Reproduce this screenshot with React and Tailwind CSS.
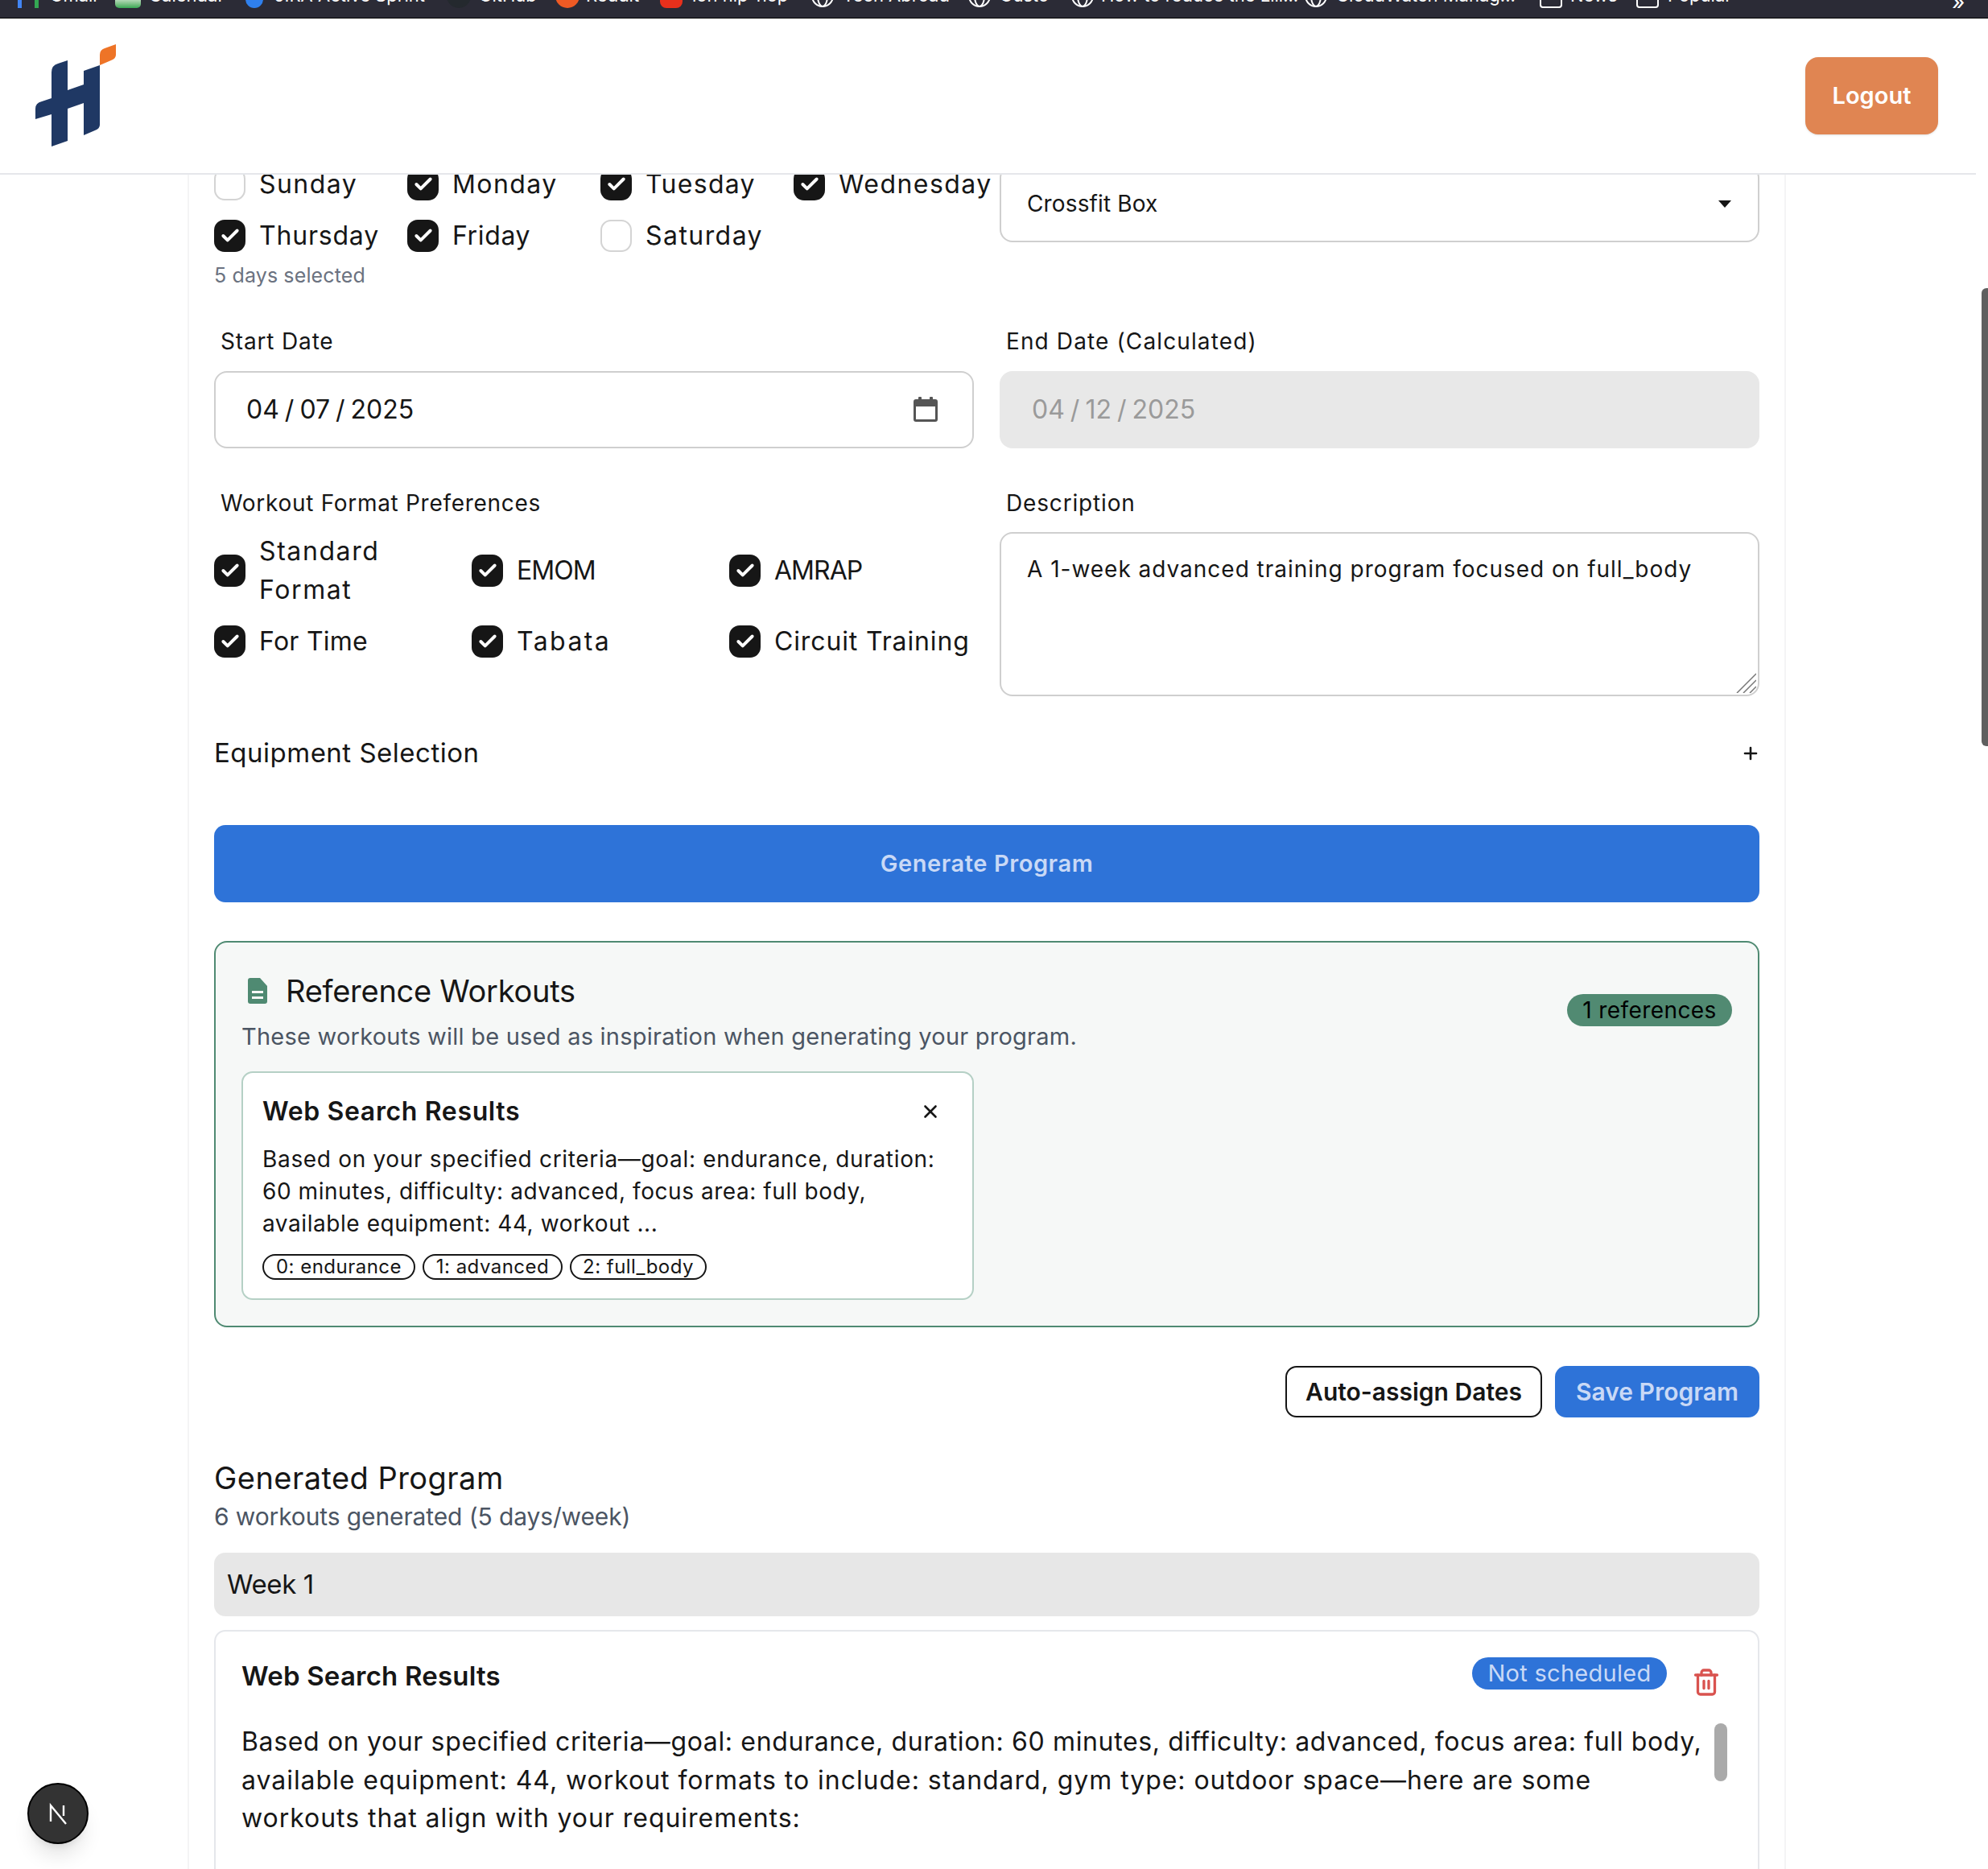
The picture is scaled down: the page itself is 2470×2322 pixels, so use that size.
import React from "react";
import { Check, Plus, X, Trash2 } from "lucide-react";

const Globe = () => (
  <svg width="30" height="30" viewBox="0 0 30 30" fill="none" stroke="#fff" strokeWidth="2" className="shrink-0">
    <circle cx="15" cy="15" r="13" />
    <ellipse cx="15" cy="15" rx="6" ry="13" />
  </svg>
);
const Folder = () => <div className="w-[28px] h-[30px] shrink-0 border-2 border-white rounded-[4px]" />;
const Dot = ({ cls }) => <div className={`h-[30px] shrink-0 ${cls}`} />;

const bookmarks = [
  { w: "w-[121px]", gap: "gap-[14px]", icon: <div className="w-[26px] h-[30px] shrink-0 flex justify-between"><div className="w-[5px] bg-[#4285f4]" /><div className="w-[5px] bg-[#34a853]" /></div>, t: "Gmail" },
  { w: "w-[162px]", gap: "gap-[10px]", icon: <Dot cls="w-[32px] rounded-[5px] bg-gradient-to-t from-[#34a853] via-[#e8f0e8] to-[#fbbc04]" />, t: "Calendar" },
  { w: "w-[250px]", gap: "gap-[14px]", icon: <Dot cls="w-[22px] rounded-b-[11px] bg-[#2f80ed]" />, t: "JIRA Active Sprint" },
  { w: "w-[135px]", gap: "gap-[10px]", icon: <Dot cls="w-[30px] rounded-full bg-[#24292e]" />, t: "GitHub" },
  { w: "w-[130px]", gap: "gap-[8px]", icon: <Dot cls="w-[30px] rounded-full bg-[#ee5a24]" />, t: "Reddit" },
  { w: "w-[187px]", gap: "gap-[12px]", icon: <Dot cls="w-[28px] rounded-[8px] bg-[#e8301c]" />, t: "ion hip-hop" },
  { w: "w-[195px]", gap: "gap-[10px]", icon: <Globe />, t: "Tech Abroad" },
  { w: "w-[128px]", gap: "gap-[10px]", icon: <Globe />, t: "Gusto" },
  { w: "w-[290px]", gap: "gap-[8px]", icon: <Globe />, t: "How to reduce the Lili..." },
  { w: "w-[293px]", gap: "gap-[10px]", icon: <Globe />, t: "CloudWatch Manag..." },
  { w: "w-[120px]", gap: "gap-[10px]", icon: <Folder />, t: "News" },
  { w: "w-[392px]", gap: "gap-[11px]", icon: <Folder />, t: "Popular" },
];

const Box = ({ on }) =>
  on ? (
    <div className="w-[39px] h-[40px] shrink-0 rounded-[13px] bg-[#161616] flex items-center justify-center">
      <Check size={26} strokeWidth={3.6} color="#fff" />
    </div>
  ) : (
    <div className="w-[39px] h-[40px] shrink-0 rounded-[13px] bg-white border-2 border-[#d4d4d4]" />
  );

const Opt = ({ cls, children }) => (
  <div className="flex items-center gap-[17px] min-w-0">
    <Box on />
    <span className={`text-[32px] leading-[48px] text-[#161616] whitespace-nowrap ${cls}`}>{children}</span>
  </div>
);

const Day = ({ on, w, cls = "tracking-[0.045em]", children }) => (
  <div className={`flex items-center gap-[17px] h-[40px] ${w}`}>
    <Box on={on} />
    <span className={`text-[32px] leading-[40px] text-[#161616] whitespace-nowrap ${cls}`}>{children}</span>
  </div>
);

const Label = ({ cls = "tracking-[0.03em]", children }) => (
  <div className={`h-[40px] pl-[8px] text-[28px] leading-[40px] text-[#161616] ${cls}`}>{children}</div>
);

export default function App() {
  return (
    <div className="relative w-[2470px] h-[2322px] overflow-hidden bg-white flex flex-col font-['Inter',sans-serif]">
      <div className="h-[23px] shrink-0 bg-[#2b2b36] border-b border-black flex overflow-hidden pl-[22px]">
        {bookmarks.map((b) => (
          <div key={b.t} className={`${b.w} shrink-0 flex ${b.gap} -mt-[20px] h-[30px]`}>
            {b.icon}
            <span className="text-[22px] leading-[28px] text-white whitespace-nowrap">{b.t}</span>
          </div>
        ))}
        <span className="text-[28px] leading-[20px] -mt-[8px] text-white">»</span>
      </div>

      <header className="h-[194px] w-[2455px] shrink-0 border-b-2 border-[#e5e7eb] flex items-start justify-between bg-white pl-[44px] pr-[47px] z-10">
        <svg width="100" height="130" viewBox="44 55 100 130" className="mt-[32px]">
          <path d="M64 90 Q64 81 72 79 L84 75 L84 112 L104 105 L104 88 L124 81 L124 155 Q124 160 118 162 L104 168 L104 128 L84 135 L84 175 L64 182 L64 142 L44 148 L44 135 Q44 128 52 126 L64 122 Z" fill="#1f3864" />
          <path d="M124 81 L124 68 Q124 62 130 60 L144 55 L144 68 Q144 73 138 75 Z" fill="#ee7427" />
        </svg>
        <button className="mt-[48px] w-[165px] h-[96px] rounded-[16px] bg-[#e08552] text-white text-[29px] font-semibold shadow-sm">Logout</button>
      </header>

      <main className="flex-1 min-h-0 overflow-hidden">
        <div className="ml-[233px] w-[1986px] border-x-2 border-[#f4f4f5] px-[31px] -mt-[12px] text-[#161616]">
          <div className="grid grid-cols-2 gap-x-[32px] h-[199px]">
            <div className="pt-[4px]">
              <div className="flex">
                <Day w="w-[240px]">Sunday</Day>
                <Day on w="w-[240px]">Monday</Day>
                <Day on w="w-[240px]" cls="tracking-[0.04em]">Tuesday</Day>
                <Day on w="w-[224px]">Wednesday</Day>
              </div>
              <div className="flex mt-[24px]">
                <Day on w="w-[240px]" cls="tracking-[0.025em]">Thursday</Day>
                <Day on w="w-[240px]" cls="tracking-[0.02em]">Friday</Day>
                <Day w="w-[240px]">Saturday</Day>
              </div>
              <div className="mt-[12px] text-[25px] leading-[34px] tracking-[0.005em] text-[#6b7280]">5 days selected</div>
            </div>
            <div className="h-[96px] border-2 border-[#cfcfcf] rounded-[16px] flex items-center justify-between pl-[32px] pr-[33px] bg-white">
              <span className="text-[28px] tracking-[0.005em]">Crossfit Box</span>
              <svg width="16" height="9" viewBox="0 0 16 9"><path d="M0 0 H16 L8 9 Z" fill="#161616" /></svg>
            </div>
          </div>

          <div className="grid grid-cols-2 gap-x-[32px]">
            <div>
              <Label>Start Date</Label>
              <div className="mt-[17px] h-[96px] border-2 border-[#cfcfcf] rounded-[16px] flex items-center justify-between pl-[38px] pr-[42px]">
                <span className="text-[32px] [word-spacing:-2px]">04 / 07 / 2025</span>
                <svg width="32" height="32" viewBox="0 0 32 32" fill="#555">
                  <rect x="7" y="0" width="4" height="6" rx="1" />
                  <rect x="21" y="0" width="4" height="6" rx="1" />
                  <path d="M4 3 H28 Q31 3 31 6 V28 Q31 31 28 31 H4 Q1 31 1 28 V6 Q1 3 4 3 Z M4 12 V28 H28 V12 Z" fillRule="evenodd" />
                </svg>
              </div>
            </div>
            <div>
              <Label cls="tracking-[0.04em]">End Date (Calculated)</Label>
              <div className="mt-[17px] h-[96px] rounded-[16px] bg-[#e8e8e8] flex items-center pl-[40px]">
                <span className="text-[32px] [word-spacing:-2px] text-[#9a9a9a]">04 / 12 / 2025</span>
              </div>
            </div>
          </div>

          <div className="grid grid-cols-2 gap-x-[32px] mt-[48px]">
            <div>
              <Label cls="tracking-[0.025em]">Workout Format Preferences</Label>
              <div className="mt-[16px] grid grid-cols-[320px_320px_304px]">
                <div className="h-[96px] flex items-center">
                  <Opt cls="tracking-[0.05em]"><span className="block">Standard</span><span className="block">Format</span></Opt>
                </div>
                <div className="h-[96px] flex items-center"><Opt cls="-tracking-[0.03em]">EMOM</Opt></div>
                <div className="h-[96px] flex items-center"><Opt cls="-tracking-[0.03em]">AMRAP</Opt></div>
                <div className="h-[48px] mt-[16px] flex items-center"><Opt cls="tracking-[0.008em]">For Time</Opt></div>
                <div className="h-[48px] mt-[16px] flex items-center"><Opt cls="tracking-[0.075em]">Tabata</Opt></div>
                <div className="h-[48px] mt-[16px] flex items-center"><Opt cls="tracking-[0.027em]">Circuit Training</Opt></div>
              </div>
            </div>
            <div>
              <Label>Description</Label>
              <div className="relative mt-[16px] h-[204px] border-2 border-[#cfcfcf] rounded-[16px] pl-[32px] pt-[22px]">
                <span className="text-[28px] leading-[44px] tracking-[0.035em]">A 1-week advanced training program focused on full_body</span>
                <svg className="absolute right-[2px] bottom-[2px]" width="26" height="26" viewBox="0 0 26 26" stroke="#777" strokeWidth="1.5">
                  <path d="M2 26 L26 2 M10 26 L26 10 M18 26 L26 18" />
                </svg>
              </div>
            </div>
          </div>

          <div className="mt-[51px] h-[40px] flex items-center justify-between">
            <span className="text-[33px] tracking-[0.015em]">Equipment Selection</span>
            <Plus size={24} strokeWidth={2.6} color="#161616" className="-mr-[1px]" />
          </div>

          <button className="mt-[69px] w-full h-[96px] rounded-[14px] bg-[#2e73d8] text-[#c9d9f6] text-[29px] tracking-[0.02em] font-semibold flex items-center justify-center">Generate Program</button>

          <section className="mt-[48px] h-[480px] border-2 border-[#4f8a72] rounded-[16px] bg-[#f6f8f7] pl-[32px] pr-[32px]">
            <div className="flex justify-between">
              <div>
                <div className="flex items-center gap-[23px] h-[60px] mt-[30px] pl-[8px]">
                  <svg width="24" height="32" viewBox="0 0 24 32">
                    <path d="M3 0 H15 L24 10 V29 Q24 32 21 32 H3 Q0 32 0 29 V3 Q0 0 3 0 Z" fill="#4f8a72" />
                    <rect x="5" y="16" width="14" height="3" fill="#f6f8f7" />
                    <rect x="5" y="23" width="14" height="3" fill="#f6f8f7" />
                  </svg>
                  <span className="text-[38px] -tracking-[0.007em]">Reference Workouts</span>
                </div>
                <div className="mt-[7px] text-[29px] leading-[40px] tracking-[0.008em] text-[#4b5563] whitespace-nowrap">These workouts will be used as inspiration when generating your program.</div>
              </div>
              <div className="mt-[64px] h-[40px] w-[205px] rounded-full bg-[#518a72] text-black text-[28px] tracking-[0.015em] flex items-center justify-center">1 references</div>
            </div>
            <div className="mt-[23px] w-[910px] h-[284px] border-2 border-[#b5d0c5] rounded-[14px] bg-white pl-[24px] pr-[24px]">
              <div className="flex items-center justify-between h-[40px] mt-[28px] pr-[15px]">
                <span className="text-[32px] font-semibold tracking-[0.02em]">Web Search Results</span>
                <X size={26} strokeWidth={2.4} color="#161616" />
              </div>
              <div className="mt-[19px] text-[28px] leading-[40px] tracking-[0.02em] whitespace-nowrap">
                <div className="tracking-[0.024em]">Based on your specified criteria—goal: endurance, duration:</div>
                <div>60 minutes, difficulty: advanced, focus area: full body,</div>
                <div>available equipment: 44, workout ...</div>
              </div>
              <div className="mt-[18px] flex gap-[9px]">
                <span className="w-[190px] h-[32px] border-2 border-[#161616] rounded-full text-[24px] leading-[27px] text-center tracking-[0.02em]">0: endurance</span>
                <span className="w-[174px] h-[32px] border-2 border-[#161616] rounded-full text-[24px] leading-[27px] text-center tracking-[0.02em]">1: advanced</span>
                <span className="w-[170px] h-[32px] border-2 border-[#161616] rounded-full text-[24px] leading-[27px] text-center tracking-[0.02em]">2: full_body</span>
              </div>
            </div>
          </section>

          <div className="mt-[48px] flex justify-end gap-[16px]">
            <button className="w-[319px] h-[64px] rounded-[14px] border-2 border-[#161616] bg-white text-[30px] font-semibold text-[#161616]">Auto-assign Dates</button>
            <button className="w-[254px] h-[64px] rounded-[14px] bg-[#2e73d8] text-[30px] font-semibold text-[#c9d9f6]">Save Program</button>
          </div>

          <div className="mt-[50px] h-[50px] text-[38px] leading-[50px] tracking-[0.012em]">Generated Program</div>
          <div className="mt-[3px] h-[40px] text-[30px] leading-[40px] -tracking-[0.004em] text-[#4b5563]">6 workouts generated (5 days/week)</div>

          <div className="mt-[25px] h-[79px] rounded-[14px] bg-[#e7e7e7] flex items-center pl-[16px]">
            <span className="text-[33px] -tracking-[0.012em]">Week 1</span>
          </div>

          <div className="relative mt-[17px] h-[400px] border-2 border-[#e5e7eb] rounded-[14px] bg-white pl-[32px] pr-[38px]">
            <div className="flex items-start justify-between">
              <span className="mt-[33px] text-[33px] leading-[44px] font-semibold tracking-[0.006em]">Web Search Results</span>
              <div className="flex items-start">
                <div className="mt-[32px] w-[242px] h-[40px] rounded-full bg-[#2e73d8] text-[#c9d9f6] text-[29px] tracking-[0.01em] flex items-center justify-center">Not scheduled</div>
                <Trash2 size={36} strokeWidth={2.2} color="#d9534f" className="mt-[45px] ml-[31px] mr-[8px]" />
              </div>
            </div>
            <div className="mt-[32px] text-[32px] leading-[47.5px] tracking-[0.03em] whitespace-nowrap">
              <div className="tracking-[0.02em]">Based on your specified criteria—goal: endurance, duration: 60 minutes, difficulty: advanced, focus area: full body,</div>
              <div>available equipment: 44, workout formats to include: standard, gym type: outdoor space—here are some</div>
              <div>workouts that align with your requirements:</div>
            </div>
            <div className="absolute right-[38px] top-[114px] w-[16px] h-[72px] rounded-full bg-[#aaaaaa]" />
          </div>
        </div>
      </main>

      <div className="absolute right-0 top-[358px] w-[8px] h-[569px] rounded-l-[6px] bg-[#5f5f5f]" />

      <div className="absolute left-[34px] top-[2215px] w-[76px] h-[76px] rounded-full bg-[#333333] border-2 border-black shadow-xl flex items-center justify-center">
        <svg width="28" height="28" viewBox="0 0 28 28" fill="none" stroke="#fff" strokeWidth="2.4">
          <path d="M5 24 V4 L24 27" />
          <path d="M21 4 V17" />
        </svg>
      </div>
    </div>
  );
}
